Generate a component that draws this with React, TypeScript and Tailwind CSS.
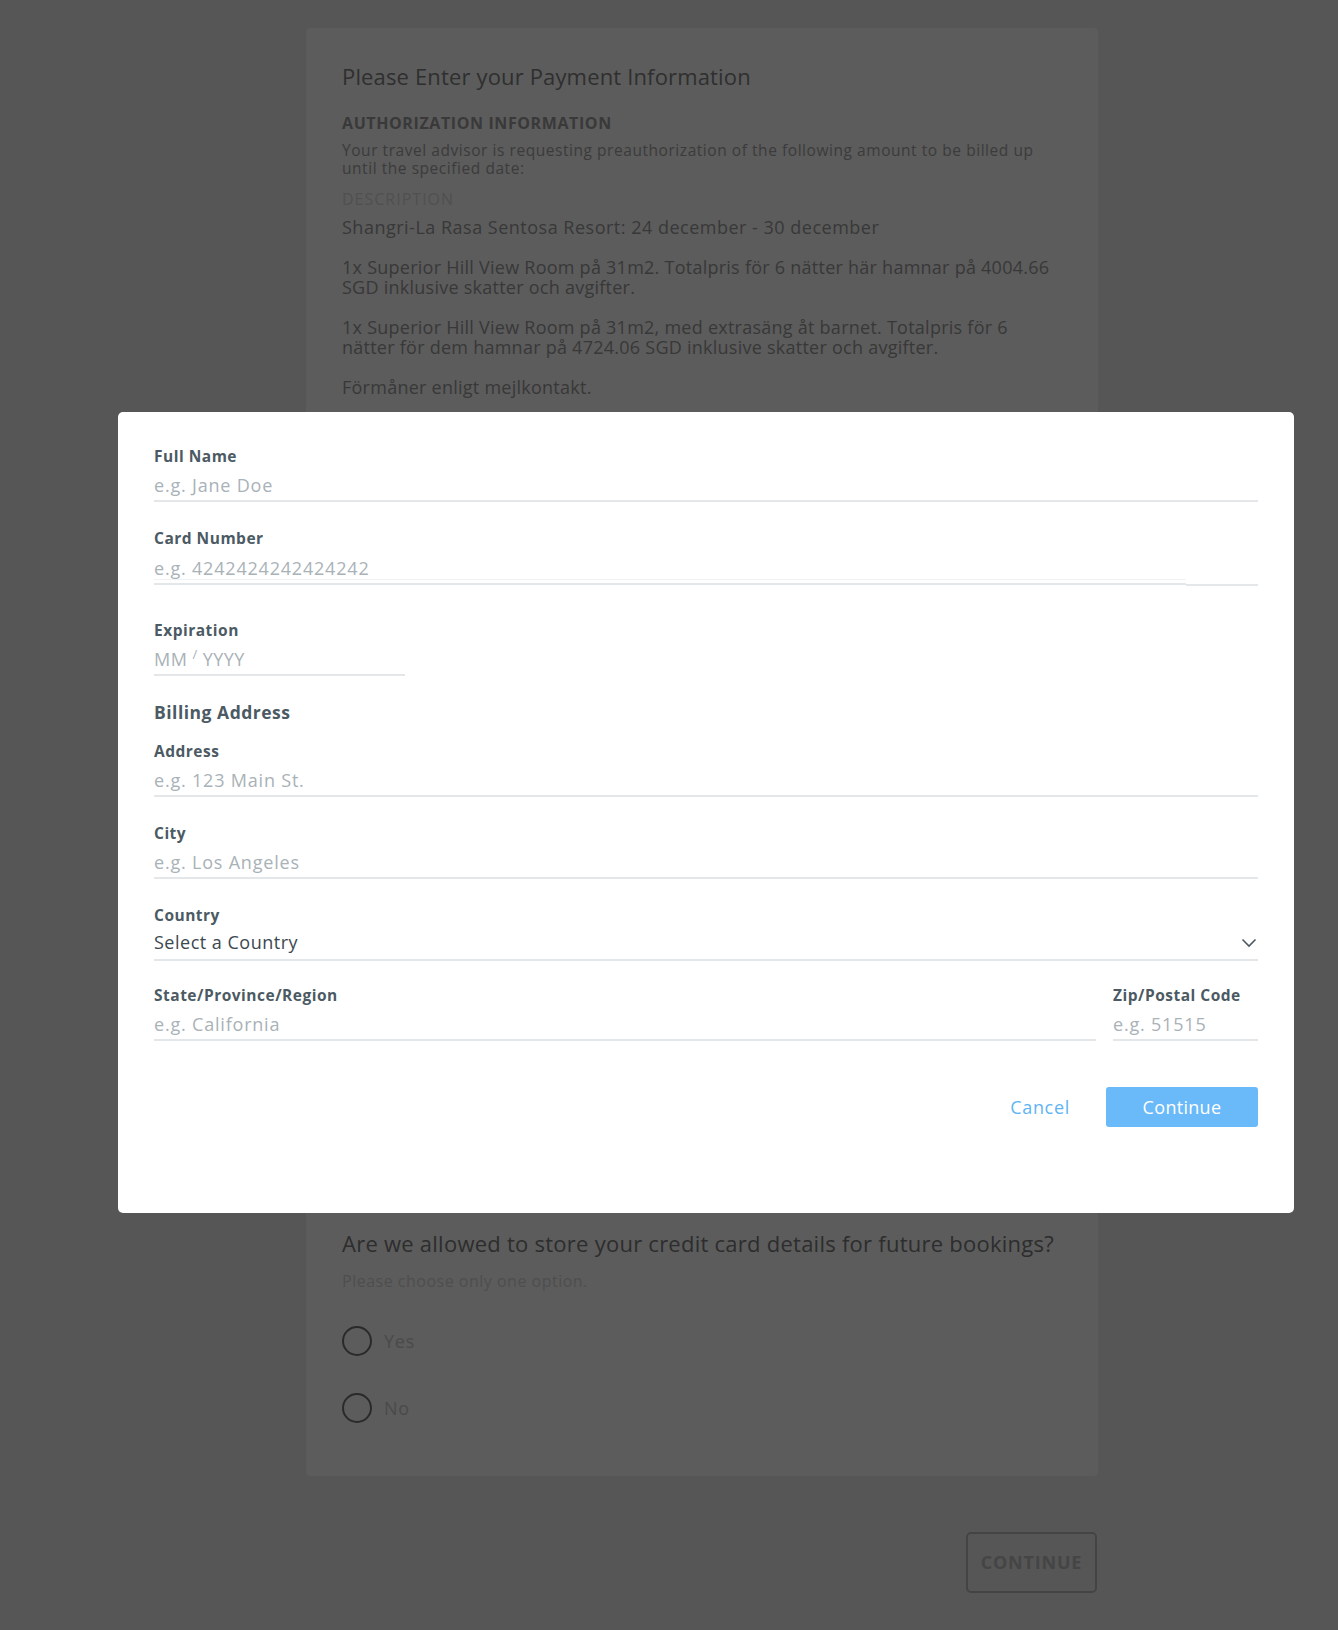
import * as React from "react";

const font = { fontFamily: "'Open Sans', Lato, sans-serif" };

function Label({ children }: { children: React.ReactNode }) {
  return <div className="h-5 text-[15.5px] font-bold leading-5 tracking-[0.5px] text-[#4b5a63]">{children}</div>;
}

function Field({ label, placeholder, className = "" }: { label: string; placeholder: string; className?: string }) {
  return (
    <div className={className}>
      <Label>{label}</Label>
      <div className="flex h-9 items-center border-b-2 border-[#e3e7ea] pt-1 text-[18px] tracking-[0.8px] text-[#a9b2b7]">{placeholder}</div>
    </div>
  );
}

function Radio({ label }: { label: string }) {
  return (
    <div className="flex items-center gap-3">
      <span className="h-[30px] w-[30px] rounded-full border-2 border-[#2a2a2a]" />
      <span className="text-[18px] tracking-[0.8px] text-[#4a4a4a]">{label}</span>
    </div>
  );
}

export default function App() {
  return (
    <div className="relative min-h-screen bg-[#565656] pt-[28px] pb-[37px]" style={font}>
      <div className="ml-[306px] w-[792px] rounded-sm bg-[#5c5c5c] px-[36px] pt-[34px] pb-[53px]">
        <h1 className="text-[22px] leading-[28px] tracking-[0.15px] text-[#2f2f2f]">Please Enter your Payment Information</h1>
        <h2 className="mt-[23px] text-[16px] font-bold leading-5 tracking-[0.6px] text-[#393939]">AUTHORIZATION INFORMATION</h2>
        <p className="mt-2 text-[15.5px] leading-[18px] tracking-[0.55px] text-[#3b3b3b]">
          Your travel advisor is requesting preauthorization of the following amount to be billed up
          <br />
          until the specified date:
        </p>
        <div className="mt-[13px] text-[16px] leading-[18px] tracking-[1px] text-[#505050]">DESCRIPTION</div>
        <div className="mt-[9px] text-[18px] leading-5 tracking-[0.25px] text-[#383838]">
          <p className="mb-5 tracking-[0.5px]">Shangri-La Rasa Sentosa Resort: 24 december - 30 december</p>
          <p className="mb-5">
            1x Superior Hill View Room på 31m2. Totalpris för 6 nätter här hamnar på 4004.66
            <br />
            SGD inklusive skatter och avgifter.
          </p>
          <p className="mb-5">
            1x Superior Hill View Room på 31m2, med extrasäng åt barnet. Totalpris för 6
            <br />
            nätter för dem hamnar på 4724.06 SGD inklusive skatter och avgifter.
          </p>
          <p>Förmåner enligt mejlkontakt.</p>
        </div>

        {/* covered by the modal */}
        <div className="h-[832px]" />

        <h2 className="text-[22px] leading-[28px] tracking-[0.25px] text-[#2d2d2d]">Are we allowed to store your credit card details for future bookings?</h2>
        <p className="mt-[14px] text-[16px] leading-5 tracking-[0.5px] text-[#4e4e4e]">Please choose only one option.</p>
        <div className="mt-[35px] flex flex-col gap-[37px]">
          <Radio label="Yes" />
          <Radio label="No" />
        </div>
      </div>

      <div className="ml-[306px] mt-[56px] flex w-[792px] justify-end">
        <button
          type="button"
          className="mr-px h-[61px] w-[131px] rounded-[5px] border-2 border-[#444] text-[18px] font-bold tracking-[0.8px] text-[#454545]"
        >
          CONTINUE
        </button>
      </div>

      <div className="absolute left-[118px] top-[412px] h-[801px] w-[1176px] rounded-[5px] bg-white px-[36px] pt-[34px]">
        <Field label="Full Name" placeholder="e.g. Jane Doe" />

        <div className="mt-[26px]">
          <Label>Card Number</Label>
          <div className="flex h-10">
            <div className="flex flex-1 flex-col">
              <div className="flex h-8 items-center pt-2 text-[18px] tracking-[0.8px] text-[#a9b2b7]">e.g. 4242424242424242</div>
              <div className="mt-[-1px] h-px bg-[#f0f2f3]" />
              <div className="mt-[3px] h-[2px] bg-[#e3e7ea]" />
            </div>
            <div className="flex w-[72px] flex-col justify-end">
              <div className="mb-[2px] h-[2px] bg-[#e3e7ea]" />
            </div>
          </div>
        </div>

        <div className="mt-[32px] w-[251px]">
          <Label>Expiration</Label>
          <div className="flex h-9 items-center border-b-2 border-[#e3e7ea] pt-1 text-[18px] tracking-[0.5px] text-[#a9b2b7]">
            <span>MM</span>
            <span className="relative -top-1 mx-[5px] text-[13px]">/</span>
            <span>YYYY</span>
          </div>
        </div>

        <h3 className="mt-6 text-[17.5px] font-bold leading-6 tracking-[0.5px] text-[#4b5a63]">Billing Address</h3>
        <Field className="mt-[17px]" label="Address" placeholder="e.g. 123 Main St." />
        <Field className="mt-[26px]" label="City" placeholder="e.g. Los Angeles" />

        <div className="mt-[26px]">
          <Label>Country</Label>
          <div className="flex h-9 items-center justify-between border-b-2 border-[#e3e7ea] text-[18px] tracking-[0.5px] text-[#3b4850]">
            <span>Select a Country</span>
            <svg width="16" height="10" viewBox="0 0 16 10" className="mr-[1px] mt-[2px]" fill="none">
              <path d="M1.5 1.5 L8 8 L14.5 1.5" stroke="#4b5a63" strokeWidth="1.6" />
            </svg>
          </div>
        </div>

        <div className="mt-[24px] flex gap-[17px]">
          <Field className="flex-1" label="State/Province/Region" placeholder="e.g. California" />
          <Field className="w-[145px]" label="Zip/Postal Code" placeholder="e.g. 51515" />
        </div>

        <div className="mt-[46px] flex items-center justify-end gap-[36px]">
          <button type="button" className="text-[18px] tracking-[0.7px] text-[#5fb5f3]">Cancel</button>
          <button type="button" className="h-10 w-[152px] rounded-[3px] bg-[#6ab9f8] text-[18px] tracking-[0.3px] text-white">Continue</button>
        </div>
      </div>
    </div>
  );
}
